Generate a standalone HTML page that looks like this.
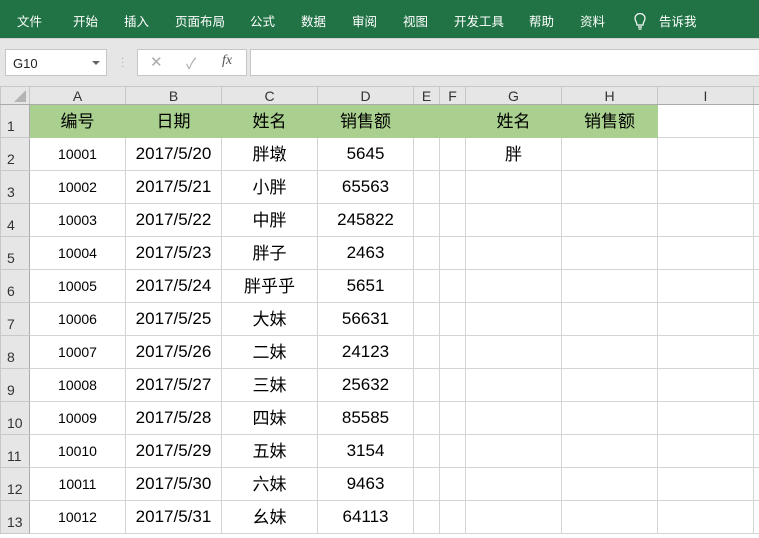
<!DOCTYPE html>
<html><head><meta charset="utf-8"><style>
*{margin:0;padding:0;box-sizing:border-box}
body{width:759px;height:538px;overflow:hidden;background:#fff;font-family:"Liberation Sans","Noto Sans CJK SC",sans-serif;position:relative}
.rib{position:absolute;left:0;top:0;width:759px;height:38px;background:#217346;color:#fff;font-size:12.5px}
.rib span{position:absolute;top:14px;white-space:nowrap;line-height:16px}
.bar{position:absolute;left:0;top:38px;width:759px;height:48px;background:#e6e6e6;border-top:1px solid #d0d0d0}
.box{position:absolute;background:#fff;border:1px solid #c6c6c6}
table{position:absolute;left:0;top:86px;border-collapse:collapse;table-layout:fixed;width:773px}
td{border:1px solid #d4d4d4;text-align:center;font-size:17px;color:#000;height:33px;padding:0;white-space:nowrap;line-height:20px}
tr.h td{background:#e6e6e6;height:18px;font-size:14px;color:#333;border-color:#c8c8c8;border-bottom:1px solid #aaa;line-height:16px}
td.rh{background:#e6e6e6;font-size:14px;color:#333;text-align:left;padding-left:6px;vertical-align:bottom;padding-bottom:1px;border-color:#c8c8c8;border-right:1px solid #aaa}
tr.g td.c{background:#a9d08e;border-color:#a9d08e}
td.s{font-size:14px}
td.k span{position:relative;top:1px}
</style></head><body>
<div class="rib">
<span style="left:17px">文件</span><span style="left:73px">开始</span><span style="left:124px">插入</span><span style="left:175px">页面布局</span><span style="left:250px">公式</span><span style="left:301px">数据</span><span style="left:352px">审阅</span><span style="left:403px">视图</span><span style="left:454px">开发工具</span><span style="left:529px">帮助</span><span style="left:580px">资料</span>
<svg style="position:absolute;left:633px;top:13px" width="14" height="18" viewBox="0 0 14 18"><path d="M4 12C4 9 2 8 2 5.5A5 5 0 0 1 12 5.5C12 8 10 9 10 12Z M5 14h4 M5.5 16h3" fill="none" stroke="#fff" stroke-width="1.2"/></svg>
<span style="left:659px">告诉我</span>
</div>
<div class="bar">
<div class="box" style="left:5px;top:10px;width:102px;height:27px;font-size:13px;color:#222;padding:6px 0 0 7px">G10<span style="position:absolute;right:6px;top:11px;border:4px solid transparent;border-top:4px solid #666"></span></div>
<div style="position:absolute;left:121px;top:18px;color:#aaa;font-size:10px;line-height:4px">·<br>·<br>·</div>
<div class="box" style="left:137px;top:10px;width:110px;height:27px;color:#aaa;font-size:15px"><span style="position:absolute;left:12px;top:3px">✕</span><span style="position:absolute;left:48px;top:3px">✓</span><span style="position:absolute;left:84px;top:3px;color:#555;font-style:italic;font-family:'Liberation Serif',serif;font-size:14px">fx</span></div>
<div class="box" style="left:250px;top:10px;width:520px;height:27px"></div>
</div>
<table>
<colgroup><col style="width:29px"><col style="width:96px"><col style="width:96px"><col style="width:96px"><col style="width:96px"><col style="width:26px"><col style="width:26px"><col style="width:96px"><col style="width:96px"><col style="width:96px"><col style="width:20px"></colgroup>
<tr class="h"><td style="position:relative"><svg style="position:absolute;right:3px;bottom:2px" width="12" height="12"><path d="M12 0V12H0Z" fill="#b4b4b4"/></svg></td><td>A</td><td>B</td><td>C</td><td>D</td><td>E</td><td>F</td><td>G</td><td>H</td><td>I</td><td></td></tr>
<tr class="g"><td class="rh">1</td><td class="c k"><span>编号</span></td><td class="c k"><span>日期</span></td><td class="c k"><span>姓名</span></td><td class="c k"><span>销售额</span></td><td class="c"></td><td class="c"></td><td class="c k"><span>姓名</span></td><td class="c k"><span>销售额</span></td><td></td><td></td></tr>
<tr><td class="rh">2</td><td class="s">10001</td><td>2017/5/20</td><td class="k"><span>胖墩</span></td><td>5645</td><td></td><td></td><td class="k"><span>胖</span></td><td></td><td></td><td></td></tr>
<tr><td class="rh">3</td><td class="s">10002</td><td>2017/5/21</td><td class="k"><span>小胖</span></td><td>65563</td><td></td><td></td><td></td><td></td><td></td><td></td></tr>
<tr><td class="rh">4</td><td class="s">10003</td><td>2017/5/22</td><td class="k"><span>中胖</span></td><td>245822</td><td></td><td></td><td></td><td></td><td></td><td></td></tr>
<tr><td class="rh">5</td><td class="s">10004</td><td>2017/5/23</td><td class="k"><span>胖子</span></td><td>2463</td><td></td><td></td><td></td><td></td><td></td><td></td></tr>
<tr><td class="rh">6</td><td class="s">10005</td><td>2017/5/24</td><td class="k"><span>胖乎乎</span></td><td>5651</td><td></td><td></td><td></td><td></td><td></td><td></td></tr>
<tr><td class="rh">7</td><td class="s">10006</td><td>2017/5/25</td><td class="k"><span>大妹</span></td><td>56631</td><td></td><td></td><td></td><td></td><td></td><td></td></tr>
<tr><td class="rh">8</td><td class="s">10007</td><td>2017/5/26</td><td class="k"><span>二妹</span></td><td>24123</td><td></td><td></td><td></td><td></td><td></td><td></td></tr>
<tr><td class="rh">9</td><td class="s">10008</td><td>2017/5/27</td><td class="k"><span>三妹</span></td><td>25632</td><td></td><td></td><td></td><td></td><td></td><td></td></tr>
<tr><td class="rh">10</td><td class="s">10009</td><td>2017/5/28</td><td class="k"><span>四妹</span></td><td>85585</td><td></td><td></td><td></td><td></td><td></td><td></td></tr>
<tr><td class="rh">11</td><td class="s">10010</td><td>2017/5/29</td><td class="k"><span>五妹</span></td><td>3154</td><td></td><td></td><td></td><td></td><td></td><td></td></tr>
<tr><td class="rh">12</td><td class="s">10011</td><td>2017/5/30</td><td class="k"><span>六妹</span></td><td>9463</td><td></td><td></td><td></td><td></td><td></td><td></td></tr>
<tr><td class="rh">13</td><td class="s">10012</td><td>2017/5/31</td><td class="k"><span>幺妹</span></td><td>64113</td><td></td><td></td><td></td><td></td><td></td><td></td></tr>
</table>
</body></html>
